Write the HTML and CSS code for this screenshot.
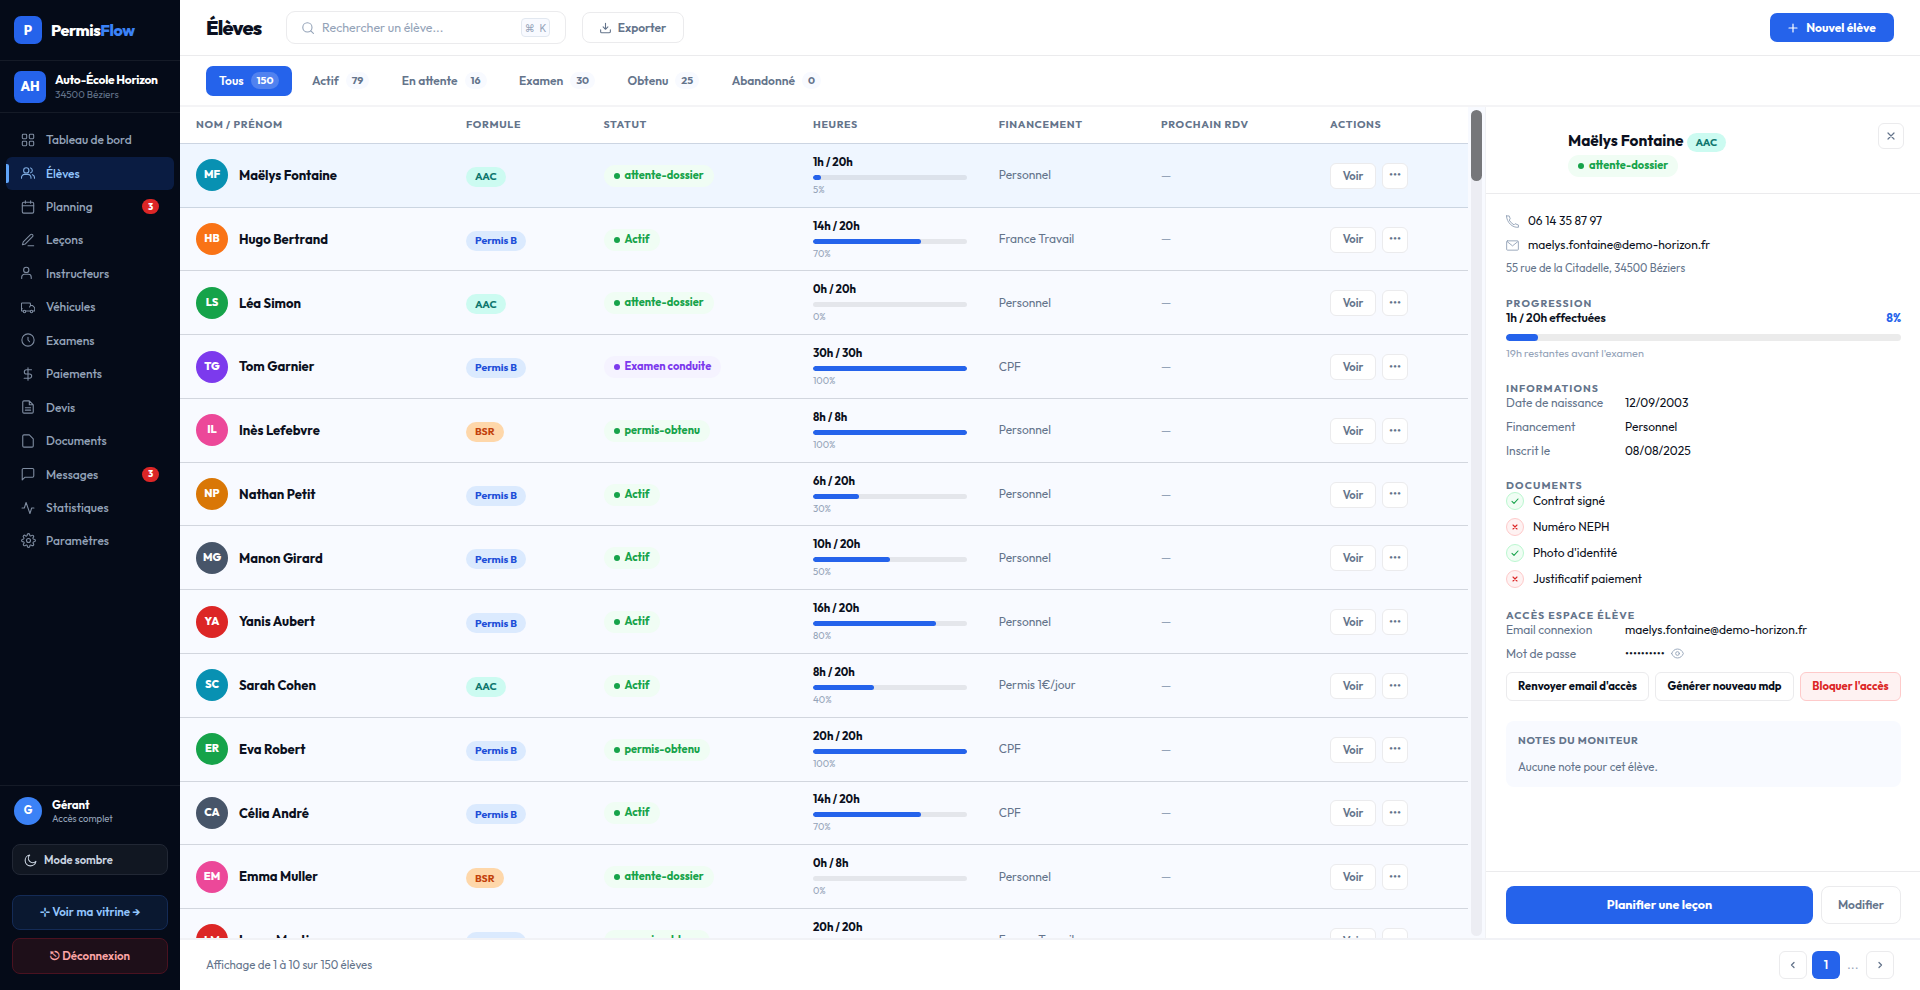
FILE: index.html
```html
<!DOCTYPE html>
<html lang="fr">
<head>
<meta charset="utf-8">
<title>PermisFlow – Élèves</title>
<link rel="stylesheet" href="styles.css">
</head>
<body>
<div class="app">
<aside class="sidebar">
  <div class="brand"><span class="brand-mark">P</span><span class="brand-name">Permis<b>Flow</b></span></div>
  <div class="school"><span class="school-mark">AH</span><div><div class="school-name">Auto-École Horizon</div><div class="school-city">34500 Béziers</div></div></div>
  <nav class="nav">
    <a class="nav-item"><svg viewBox="0 0 16 16"><rect x="1.5" y="1.5" width="5" height="5" rx="1"/><rect x="9.5" y="1.5" width="5" height="5" rx="1"/><rect x="1.5" y="9.5" width="5" height="5" rx="1"/><rect x="9.5" y="9.5" width="5" height="5" rx="1"/></svg>Tableau de bord</a>
    <a class="nav-item active"><svg viewBox="0 0 16 16"><circle cx="6" cy="5" r="3"/><path d="M.6 14v-1a3.4 3.4 0 0 1 3.4-3.4h4A3.4 3.4 0 0 1 11.400 13v1M11 2.200a3 3 0 0 1 0 5.600M13 9.900a3.400 3.400 0 0 1 2.400 3.100v1"/></svg>Élèves</a>
    <a class="nav-item"><svg viewBox="0 0 16 16"><rect x="1.500" y="2.500" width="13" height="12.500" rx="1.500"/><path d="M1.500 6.500h13M5 .8v3M11 .8v3"/></svg>Planning<span class="count-dot">3</span></a>
    <a class="nav-item"><svg viewBox="0 0 16 16"><path d="M10.900 1.900a1.600 1.600 0 0 1 2.300 2.300L5 12.500l-3.400 1 1-3.400zM8 14.500h6.500"/></svg>Leçons</a>
    <a class="nav-item"><svg viewBox="0 0 16 16"><circle cx="6" cy="4.500" r="3"/><path d="M.8 14.200v-1.400a3.300 3.300 0 0 1 3.300-3.300h4.300a3.300 3.300 0 0 1 3.300 3.300v1.400"/></svg>Instructeurs</a>
    <a class="nav-item"><svg viewBox="0 0 16 16"><path d="M2.600 12.500H1.200a.7.7 0 0 1-.7-.7V4.200a.7.7 0 0 1 .7-.7h8.600a1 1 0 0 1 1 1v1.700h2.200l2.700 2.600v3.700h-1.900M5.400 12.500h5.200M.5 10h1M10.800 6.200l-1 1.800"/><circle cx="4" cy="13.200" r="1.400"/><circle cx="12" cy="13.200" r="1.400"/></svg>Véhicules</a>
    <a class="nav-item"><svg viewBox="0 0 16 16"><circle cx="8" cy="8" r="7"/><path d="M8 4.800V8l1.800 2"/></svg>Examens</a>
    <a class="nav-item"><svg viewBox="0 0 16 16"><path d="M8 .8v14.400M12 3.200H6.200a2.400 2.400 0 0 0 0 4.800h3.600a2.400 2.400 0 0 1 0 4.800H3.600"/></svg>Paiements</a>
    <a class="nav-item"><svg viewBox="0 0 16 16"><path d="M9.500 1H3.400A1.400 1.400 0 0 0 2 2.400v11.200A1.400 1.400 0 0 0 3.400 15h9.200a1.400 1.400 0 0 0 1.400-1.400V5.500zM9.500 1v4.500H14M5 8.800h6M5 11.600h6"/></svg>Devis</a>
    <a class="nav-item"><svg viewBox="0 0 16 16"><path d="M9.500 1H3.400A1.400 1.400 0 0 0 2 2.400v11.200A1.400 1.400 0 0 0 3.400 15h9.200a1.400 1.400 0 0 0 1.400-1.400V5.500z"/></svg>Documents</a>
    <a class="nav-item"><svg viewBox="0 0 16 16"><path d="M14.600 10.400a1.400 1.400 0 0 1-1.400 1.400H4.400L1.400 14.800V3.200a1.400 1.400 0 0 1 1.400-1.400h10.400a1.400 1.400 0 0 1 1.400 1.400z"/></svg>Messages<span class="count-dot">3</span></a>
    <a class="nav-item"><svg viewBox="0 0 16 16"><path d="M14.800 8h-2.600l-2 6.300L5.800 1.700 3.800 8H1.200"/></svg>Statistiques</a>
    <a class="nav-item"><svg viewBox="0 0 24 24" class="gear"><circle cx="12" cy="12" r="3.200"/><path d="M19.400 15a1.650 1.650 0 0 0 .33 1.820l.06.06a2 2 0 1 1-2.830 2.830l-.06-.06a1.650 1.650 0 0 0-2.800 1.180V21a2 2 0 1 1-4 0v-.09a1.650 1.650 0 0 0-2.900-1.080l-.06.06a2 2 0 1 1-2.830-2.830l.06-.06A1.650 1.650 0 0 0 3.190 14H3a2 2 0 1 1 0-4h.09a1.650 1.650 0 0 0 1.080-2.900l-.06-.06a2 2 0 1 1 2.830-2.830l.06.06A1.650 1.650 0 0 0 10 3.090V3a2 2 0 1 1 4 0v.09a1.650 1.650 0 0 0 2.820 1.180l.06-.06a2 2 0 1 1 2.830 2.830l-.06.06A1.650 1.650 0 0 0 20.910 10H21a2 2 0 1 1 0 4h-.09a1.650 1.650 0 0 0-1.510 1z"/></svg>Paramètres</a>
  </nav>
  <div class="side-foot">
    <div class="user"><span class="user-mark">G</span><div><div class="user-name">Gérant</div><div class="user-role">Accès complet</div></div></div>
    <button class="side-btn theme"><svg viewBox="0 0 24 24"><path d="M22 13.500A10 10 0 1 1 10.500 2a7.800 7.800 0 0 0 11.500 11.500z"/></svg>Mode sombre</button>
    <button class="side-btn shop">⊹ Voir ma vitrine →</button>
    <button class="side-btn logout">⎋ Déconnexion</button>
  </div>
</aside>
<main class="main">
  <header class="topbar">
    <h1>Élèves</h1>
    <div class="search"><svg viewBox="0 0 12 12"><circle cx="5.400" cy="5.400" r="4.600"/><path d="M8.800 8.800l2.600 2.600"/></svg><span>Rechercher un élève...</span><kbd>⌘ K</kbd></div>
    <button class="export"><svg viewBox="0 0 12 12"><path d="M6 .8v6.400M3.400 4.800L6 7.400l2.600-2.600M.7 8v2a1.200 1.200 0 0 0 1.200 1.200h8.200A1.200 1.200 0 0 0 11.300 10V8"/></svg>Exporter</button>
    <button class="new"><svg viewBox="0 0 10 10"><path d="M5 1v8M1 5h8"/></svg>Nouvel élève</button>
  </header>
  <div class="tabs">
    <span class="tab on">Tous<i>150</i></span><span class="tab">Actif<i>79</i></span><span class="tab">En attente<i>16</i></span><span class="tab">Examen<i>30</i></span><span class="tab">Obtenu<i>25</i></span><span class="tab">Abandonné<i>0</i></span>
  </div>
  <div class="body">
    <section class="list">
      <div class="table">
        <div class="row head"><span>NOM / PRÉNOM</span><span>FORMULE</span><span>STATUT</span><span>HEURES</span><span>FINANCEMENT</span><span>PROCHAIN RDV</span><span>ACTIONS</span></div>
        <div class="row sel"><div class="who"><i class="av cyan">MF</i>Maëlys Fontaine</div><div><span class="tag aac">AAC</span></div><div><span class="st">attente-dossier</span></div><div class="hours"><b>1h / 20h</b><div class="bar"><i style="width:5%"></i></div><small>5%</small></div><div class="fin">Personnel</div><div class="rdv">—</div><div class="acts"><button>Voir</button><button class="more">···</button></div></div>
        <div class="row"><div class="who"><i class="av orange">HB</i>Hugo Bertrand</div><div><span class="tag pb">Permis B</span></div><div><span class="st">Actif</span></div><div class="hours"><b>14h / 20h</b><div class="bar"><i style="width:70%"></i></div><small>70%</small></div><div class="fin">France Travail</div><div class="rdv">—</div><div class="acts"><button>Voir</button><button class="more">···</button></div></div>
        <div class="row"><div class="who"><i class="av green">LS</i>Léa Simon</div><div><span class="tag aac">AAC</span></div><div><span class="st">attente-dossier</span></div><div class="hours"><b>0h / 20h</b><div class="bar"><i style="width:0%"></i></div><small>0%</small></div><div class="fin">Personnel</div><div class="rdv">—</div><div class="acts"><button>Voir</button><button class="more">···</button></div></div>
        <div class="row"><div class="who"><i class="av violet">TG</i>Tom Garnier</div><div><span class="tag pb">Permis B</span></div><div><span class="st exam">Examen conduite</span></div><div class="hours"><b>30h / 30h</b><div class="bar"><i style="width:100%"></i></div><small>100%</small></div><div class="fin">CPF</div><div class="rdv">—</div><div class="acts"><button>Voir</button><button class="more">···</button></div></div>
        <div class="row"><div class="who"><i class="av pink">IL</i>Inès Lefebvre</div><div><span class="tag bsr">BSR</span></div><div><span class="st">permis-obtenu</span></div><div class="hours"><b>8h / 8h</b><div class="bar"><i style="width:100%"></i></div><small>100%</small></div><div class="fin">Personnel</div><div class="rdv">—</div><div class="acts"><button>Voir</button><button class="more">···</button></div></div>
        <div class="row"><div class="who"><i class="av amber">NP</i>Nathan Petit</div><div><span class="tag pb">Permis B</span></div><div><span class="st">Actif</span></div><div class="hours"><b>6h / 20h</b><div class="bar"><i style="width:30%"></i></div><small>30%</small></div><div class="fin">Personnel</div><div class="rdv">—</div><div class="acts"><button>Voir</button><button class="more">···</button></div></div>
        <div class="row"><div class="who"><i class="av slate">MG</i>Manon Girard</div><div><span class="tag pb">Permis B</span></div><div><span class="st">Actif</span></div><div class="hours"><b>10h / 20h</b><div class="bar"><i style="width:50%"></i></div><small>50%</small></div><div class="fin">Personnel</div><div class="rdv">—</div><div class="acts"><button>Voir</button><button class="more">···</button></div></div>
        <div class="row"><div class="who"><i class="av red">YA</i>Yanis Aubert</div><div><span class="tag pb">Permis B</span></div><div><span class="st">Actif</span></div><div class="hours"><b>16h / 20h</b><div class="bar"><i style="width:80%"></i></div><small>80%</small></div><div class="fin">Personnel</div><div class="rdv">—</div><div class="acts"><button>Voir</button><button class="more">···</button></div></div>
        <div class="row"><div class="who"><i class="av cyan">SC</i>Sarah Cohen</div><div><span class="tag aac">AAC</span></div><div><span class="st">Actif</span></div><div class="hours"><b>8h / 20h</b><div class="bar"><i style="width:40%"></i></div><small>40%</small></div><div class="fin">Permis 1€/jour</div><div class="rdv">—</div><div class="acts"><button>Voir</button><button class="more">···</button></div></div>
        <div class="row"><div class="who"><i class="av green">ER</i>Eva Robert</div><div><span class="tag pb">Permis B</span></div><div><span class="st">permis-obtenu</span></div><div class="hours"><b>20h / 20h</b><div class="bar"><i style="width:100%"></i></div><small>100%</small></div><div class="fin">CPF</div><div class="rdv">—</div><div class="acts"><button>Voir</button><button class="more">···</button></div></div>
        <div class="row"><div class="who"><i class="av slate">CA</i>Célia André</div><div><span class="tag pb">Permis B</span></div><div><span class="st">Actif</span></div><div class="hours"><b>14h / 20h</b><div class="bar"><i style="width:70%"></i></div><small>70%</small></div><div class="fin">CPF</div><div class="rdv">—</div><div class="acts"><button>Voir</button><button class="more">···</button></div></div>
        <div class="row"><div class="who"><i class="av pink">EM</i>Emma Muller</div><div><span class="tag bsr">BSR</span></div><div><span class="st">attente-dossier</span></div><div class="hours"><b>0h / 8h</b><div class="bar"><i style="width:0%"></i></div><small>0%</small></div><div class="fin">Personnel</div><div class="rdv">—</div><div class="acts"><button>Voir</button><button class="more">···</button></div></div>
        <div class="row"><div class="who"><i class="av red">LM</i>Lucas Martin</div><div><span class="tag pb">Permis B</span></div><div><span class="st">permis-obtenu</span></div><div class="hours"><b>20h / 20h</b><div class="bar"><i style="width:100%"></i></div><small>100%</small></div><div class="fin">France Travail</div><div class="rdv">—</div><div class="acts"><button>Voir</button><button class="more">···</button></div></div>
      </div>
      <div class="scroll"><div class="track"><div class="thumb"></div></div></div>
    </section>
    <aside class="panel">
      <div class="panel-head">
        <div class="panel-id"><div class="panel-name">Maëlys Fontaine<span class="tag aac">AAC</span></div><span class="st">attente-dossier</span></div>
        <button class="close"><svg viewBox="0 0 8 8"><path d="M1 1l6 6M7 1L1 7"/></svg></button>
      </div>
      <div class="panel-body">
        <div class="contact"><svg viewBox="0 0 14 14"><path d="M.5 1H3.400l1.200 3.200L3.400 5.400C4.600 7.600 6.400 9.400 8.600 10.600l1.200-1.200L13.400 10.800v2.400C7 14 .8 8 .5 1z"/></svg>06 14 35 87 97</div>
        <div class="contact"><svg viewBox="0 0 14 14"><rect x=".7" y="2" width="12.600" height="10" rx=".8"/><path d="M1.500 3L7 7.400 12.500 3"/></svg>maelys.fontaine@demo-horizon.fr</div>
        <div class="address">55 rue de la Citadelle, 34500 Béziers</div>
        <h2>PROGRESSION</h2>
        <div class="prog"><span>1h / 20h effectuées</span><b>8%</b></div>
        <div class="bar big"><i style="width:8%"></i></div>
        <div class="left">19h restantes avant l'examen</div>
        <h2>INFORMATIONS</h2>
        <div class="info"><span>Date de naissance</span>12/09/2003</div>
        <div class="info"><span>Financement</span>Personnel</div>
        <div class="info"><span>Inscrit le</span>08/08/2025</div>
        <h2 class="docs">DOCUMENTS</h2>
        <div class="doc"><i class="ok"><svg viewBox="0 0 8 8"><path d="M1 4.400l2 1.900L7 2"/></svg></i>Contrat signé</div>
        <div class="doc"><i class="ko"><svg viewBox="0 0 8 8"><path d="M2 2l4 4M6 2L2 6"/></svg></i>Numéro NEPH</div>
        <div class="doc"><i class="ok"><svg viewBox="0 0 8 8"><path d="M1 4.400l2 1.900L7 2"/></svg></i>Photo d'identité</div>
        <div class="doc"><i class="ko"><svg viewBox="0 0 8 8"><path d="M2 2l4 4M6 2L2 6"/></svg></i>Justificatif paiement</div>
        <h2 class="access">ACCÈS ESPACE ÉLÈVE</h2>
        <div class="info"><span>Email connexion</span>maelys.fontaine@demo-horizon.fr</div>
        <div class="info"><span>Mot de passe</span><em>••••••••••</em><svg viewBox="0 0 14 14"><path d="M.7 7C2 3.800 4.200 2.200 7 2.200S12 3.800 13.300 7C12 10.200 9.800 11.800 7 11.800S2 10.200.7 7z"/><circle cx="7" cy="7" r="2"/></svg></div>
        <div class="access-btns"><button>Renvoyer email d'accès</button><button>Générer nouveau mdp</button><button class="danger">Bloquer l'accès</button></div>
        <div class="notes"><h3>NOTES DU MONITEUR</h3><p>Aucune note pour cet élève.</p></div>
      </div>
      <div class="panel-foot"><button class="plan">Planifier une leçon</button><button class="edit">Modifier</button></div>
    </aside>
  </div>
  <footer class="pager">
    <span>Affichage de 1 à 10 sur 150 élèves</span>
    <div class="pages"><button><svg viewBox="0 0 8 8"><path d="M5 1.500L2.500 4 5 6.500"/></svg></button><button class="cur">1</button><span>...</span><button><svg viewBox="0 0 8 8"><path d="M3 1.500L5.500 4 3 6.500"/></svg></button></div>
  </footer>
</main>
</div>
</body>
</html>
```
FILE: styles.css
```css
*{box-sizing:border-box}
body{margin:0;font-family:Outfit,Lato,sans-serif;font-size:12px;line-height:1.26;color:#0b1020;background:#fff;overflow:hidden}
button{font:inherit;color:inherit;margin:0;padding:0;background:#fff;border:1px solid #ebebed;display:flex;align-items:center;justify-content:center;white-space:nowrap}
svg{fill:none;stroke:currentColor;stroke-width:1.2;stroke-linecap:round;stroke-linejoin:round;flex:none;display:block}
i,em{font-style:normal}
h1,h2,h3,p{margin:0}
.app{display:flex;width:1920px;height:990px}

.sidebar{width:180px;background:#050b18;display:flex;flex-direction:column;color:#94a3b8}
.brand{height:61px;display:flex;align-items:center;gap:9px;padding:0 14px;border-bottom:1px solid #151b27;font-weight:700;color:#fff}
.brand-mark,.school-mark{display:flex;align-items:center;justify-content:center;background:#2563eb;color:#fff;border-radius:7px;font-weight:800}
.brand-mark{width:28px;height:28px;font-size:13px}
.brand-name{font-size:16px;font-weight:800;letter-spacing:-.4px;padding-top:1px}
.brand-name b{color:#3b82f6;font-weight:800}
.school{height:52px;display:flex;align-items:center;gap:9px;padding:0 14px;border-bottom:1px solid #151b27}
.school-mark{width:32px;height:32px;font-size:13px}
.school-name{font-size:12px;font-weight:700;letter-spacing:-.28px;color:#fff;white-space:nowrap}
.school-city{font-size:10px;color:#64748b;padding-top:2px}
.nav{padding:11px 6px;display:flex;flex-direction:column;gap:1px;flex:1}
.nav-item{height:32.45px;display:flex;align-items:center;padding:0 15px 1px;gap:11px;font-weight:500;position:relative;border-radius:6px}
.nav-item svg{width:14px;height:14px;stroke-width:1.250;opacity:.85}
.nav-item .gear{stroke-width:1.800;width:15px;height:15px;margin-right:-1px}
.nav-item.active{background:#0a1c42;color:#93c5fd}
.nav-item.active::before{content:"";position:absolute;left:0;top:7px;width:3px;height:19px;background:#60a5fa;border-radius:0 2px 2px 0}
.count-dot{margin-left:auto;width:17px;height:15px;border-radius:8px;background:#dc2626;color:#fff;font-size:9px;font-weight:800;display:flex;align-items:center;justify-content:center}
.side-foot{height:205px;border-top:1px solid #151b27;padding:11px 12px 0}
.user{display:flex;align-items:center;gap:10px;padding-left:2px;height:28px;margin-bottom:19px}
.user-mark{width:28px;height:28px;border-radius:50%;background:#3b82f6;color:#fff;font-size:11px;font-weight:700;display:flex;align-items:center;justify-content:center}
.user-name{font-size:11.500px;font-weight:700;color:#fff;line-height:14px;letter-spacing:-.1px}
.user-role{font-size:9.500px;line-height:13px;color:#94a3b8}
.side-btn{width:156px;border-radius:8px;font-weight:600;font-size:11.500px}
.side-btn.theme{height:31px;justify-content:flex-start;padding:1px 0 0 11px;gap:7px;background:#111722;border-color:#222835;color:#cbd5e1;margin-bottom:20px;font-size:11.200px}
.theme svg{width:13px;height:13px;stroke-width:2}
.side-btn.shop{height:35px;background:#0a1830;border-color:#142b56;color:#93c5fd;margin-bottom:8px;font-size:11.600px;word-spacing:.5px}
.side-btn.logout{height:36px;background:#1e0f19;border-color:#4a1220;color:#fca5a5;word-spacing:1px}

.main{width:1740px;display:flex;flex-direction:column}
.topbar{height:56px;border-bottom:1px solid #ebebed;display:flex;align-items:center;padding:0 26px}
h1{font-size:20px;font-weight:800;letter-spacing:-.8px;width:80px;line-height:24px;padding-top:1px}
.search{width:280px;height:33px;border:1px solid #ebebed;border-radius:9px;display:flex;align-items:center;padding:0 15px;color:#94a3b8;margin-right:16px;font-size:12.450px}
.search svg{width:12px;height:12px;margin-right:8px;stroke-width:1.100}
kbd{margin-left:auto;width:29px;height:19px;border:1px solid #e2e8f0;border-radius:4px;background:#f8faff;font:10px Inter,sans-serif;word-spacing:2px;display:flex;align-items:center;justify-content:center;white-space:pre;color:#94a3b8}
.export{width:102px;height:31px;border-radius:8px;color:#64748b;font-weight:600;gap:7px}
.export svg{width:11px;height:12px}
.new{margin-left:auto;width:124px;height:29px;border:0;border-radius:7px;background:#2563eb;color:#fff;font-weight:700;gap:8px}
.new svg{width:10px;height:10px}
.tabs{height:51px;border-bottom:2px solid #f4f4f6;display:flex;align-items:center;gap:6.600px;padding:0 26px}
.tab{height:30px;padding:0 13px;border-radius:7px;display:flex;align-items:center;gap:7px;font-weight:600;color:#64748b}
.tab i{height:17px;padding:0 6px;border-radius:9px;background:#f8faff;font-size:10.500px;font-weight:700;display:flex;align-items:center}
.tab.on{background:#2563eb;color:#fff}
.tab.on i{background:#5182ef}

.body{height:831px;display:flex}
.list{width:1305px;background:#f8faff;display:flex;overflow:hidden}
.table{width:1288px;flex:none}
.row{display:grid;grid-template-columns:270px 137.500px 209.500px 185.700px 162.300px 169px 154px;height:63.780px;border-bottom:1px solid #d2d6de;align-items:center}
.row>*{padding:0 16px}
.head{height:36.900px;background:#fff;font-size:10.600px;font-weight:700;letter-spacing:.660px;color:#64748b;border-color:#ccd5e2}
.sel{background:#eff6ff;border-color:#cbd5e1}
.who{display:flex;align-items:center;gap:11px;font-size:13.050px;font-weight:700}
.av{width:32px;height:32px;border-radius:50%;color:#fff;font-size:11px;font-weight:800;display:flex;align-items:center;justify-content:center}
.cyan{background:#0891b2}.orange{background:#f97316}.green{background:#16a34a}.violet{background:#7c3aed}.pink{background:#ec4899}.amber{background:#d97706}.slate{background:#475569}.red{background:#dc2626}
.tag{display:inline-flex;align-items:center;height:20px;padding:0 9px;border-radius:10px;font-size:10.500px;font-weight:700;margin-top:3px;vertical-align:top}
.aac{background:#ccfbf1;color:#0f766e}.pb{background:#dbeafe;color:#1d4ed8}.bsr{background:#fed7aa;color:#c2410c}
.st{display:inline-flex;align-items:center;gap:5px;height:22px;padding:0 10px;border-radius:11px;background:#f0fdf4;color:#16a34a;font-size:11px;font-weight:700;vertical-align:top}
.row .st{margin-top:1px}
.st::before{content:"";width:6px;height:6px;border-radius:50%;background:currentColor}
.exam{background:#f5f3ff;color:#7c3aed}
.hours b{display:block;font-weight:700;font-size:11.300px;line-height:15px}
.hours small{display:block;font-size:9.700px;line-height:12px;color:#94a3b8}
.bar{height:5px;border-radius:3px;background:rgba(0,0,0,.08);margin:5px 0 4px;overflow:hidden}
.bar i{display:block;height:100%;border-radius:3px;background:#2563eb}
.row .fin{color:#64748b;padding-bottom:1px}
.rdv{color:#94a3b8}
.row .acts{display:flex;gap:6px;padding-top:1px}
.acts button{width:46px;height:26px;border-radius:6px;font-size:11.200px;font-weight:600;color:#64748b}
.acts .more{width:26px;font-size:14px;font-weight:700;letter-spacing:1.500px;padding:1px 0 0 1.500px}
.scroll{width:17px;padding:3px}
.track{width:11px;height:826px;border-radius:6px;background:#ecedf3}
.thumb{width:11px;height:71px;border-radius:6px;background:#76777a}

.panel{width:435px;border-left:1px solid #f1f2f5;display:flex;flex-direction:column}
.panel-head{height:87px;border-bottom:1px solid #ebebed;display:flex;justify-content:space-between;padding:16px 16px 0 82px}
.panel-id{padding-top:9px}
.panel-name{font-size:15.400px;font-weight:700;display:flex;gap:3px;height:23px;line-height:17px;white-space:nowrap}
.panel-name .tag{height:19px;margin-top:1px}
.close{width:26px;height:26px;border-radius:6px;color:#64748b}
.close svg{width:8px;height:8px}
.panel-body{flex:1;padding:15px 19px 0 20px}
.contact{height:24px;display:flex;align-items:center;gap:9px}
.contact svg{width:13px;height:13px;color:#94a3b8;stroke-width:1}
.address{font-size:11.150px;color:#64748b;height:23px;line-height:22px}
h2{font-size:10.500px;line-height:13px;font-weight:700;letter-spacing:1.100px;color:#64748b;margin-top:16px}
.address+h2{margin-top:17px}
.prog{display:flex;justify-content:space-between;font-weight:600;font-size:11.900px;letter-spacing:-.050px;line-height:15px}
.prog b{color:#2563eb;font-weight:700}
.bar.big{height:7px;border-radius:4px;margin:9px 0 5px;background:#ebebeb}
.bar.big i{border-radius:4px}
.left{font-size:10.850px;line-height:15px;color:#94a3b8;margin-bottom:21px}
.info{height:24px;line-height:16px;display:flex}
.info span{width:119px;color:#64748b}
.info em{letter-spacing:0}
.info svg{width:13px;height:13px;margin:1px 0 0 6px;color:#94a3b8;stroke-width:1}
h2.docs{margin-top:12px}
.doc{height:26px;display:flex;align-items:flex-start;gap:9px;line-height:18px}
.doc i{width:18px;height:18px;border-radius:50%;border:1px solid;display:flex;align-items:center;justify-content:center}
.doc svg{width:8px;height:8px}
.doc path{stroke-width:1.100}
.doc .ok{background:#f0fdf4;border-color:#bbf7d0;color:#16a34a}
.doc .ko{background:#fef2f2;border-color:#fecaca;color:#dc2626}
h2.access{margin-top:13px}
.access-btns{display:flex;gap:6px;margin:2px 0 20px}
.access-btns button{height:29px;border-radius:6px;font-size:11.200px;font-weight:700;width:143px}
.access-btns button:nth-child(2){width:139px}
.access-btns .danger{width:101px;background:#fef2f2;border-color:#fecaca;color:#dc2626}
.notes{background:#f8faff;border-radius:8px;height:66px;padding:13px 12px}
h3{font-size:10.500px;line-height:13px;font-weight:700;letter-spacing:.630px;color:#64748b}
.notes p{font-size:11.500px;line-height:15px;color:#64748b;margin-top:12px}
.panel-foot{height:67px;border-top:1px solid #ebebed;display:flex;gap:8px;padding:14px 19px 0 20px}
.panel-foot button{height:38px;border-radius:8px;font-weight:600}
.panel-foot .plan{width:307px;background:#2563eb;border:0;color:#fff;font-weight:700;font-size:12.500px}
.panel-foot .edit{width:80px;color:#64748b}
.pager{flex:1;border-top:2px solid #f1f2f6;display:flex;justify-content:space-between;align-items:center;padding:0 26px;color:#64748b;font-size:11.500px}
.pages{display:flex;align-items:center;gap:5px}
.pages button{width:28px;height:28px;border-radius:6px;color:#64748b}
.pages svg{width:8px;height:8px;stroke-width:1.300}
.pages .cur{background:#2563eb;border:0;color:#fff;font-weight:600;font-size:12px}
.pages span{width:16px;text-align:center;color:#94a3b8;letter-spacing:.5px}
```
